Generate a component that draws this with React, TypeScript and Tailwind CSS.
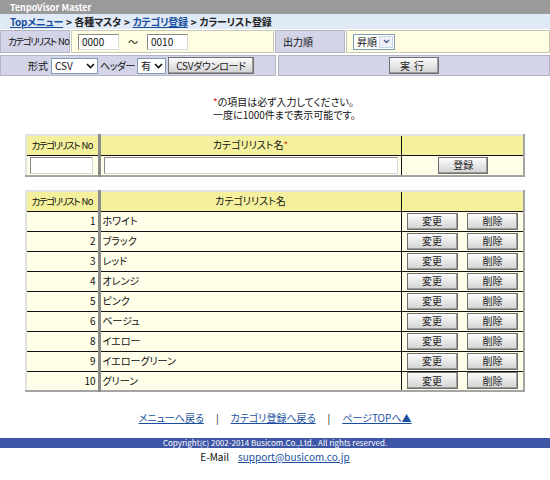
import React from "react";

const font = "font-['Noto_Sans_CJK_JP','Noto_Sans',sans-serif] [font-feature-settings:'palt']";

function Btn({ children, className = "" }: { children: React.ReactNode; className?: string }) {
  return (
    <button
      className={`flex h-[17px] items-center justify-center border border-[#707070] bg-linear-to-b from-[#fcfcfc] to-[#d2d2d2] text-[10px] leading-none whitespace-nowrap text-[#222] shadow-[inset_-1px_-1px_0_#9a9a9a] ${className}`}
    >
      {children}
    </button>
  );
}

function Select({ value, className = "", blue = false }: { value: string; className?: string; blue?: boolean }) {
  return (
    <div className={`flex h-[16px] items-stretch border border-[#7f9db9] bg-white text-[10px] ${className}`}>
      <span className="flex flex-1 items-center pl-[3px] leading-none">{value}</span>
      {blue ? (
        <span className="m-px flex w-[14px] items-center justify-center border border-[#c8d4e4] bg-[#eef2f8]">
          <svg width="7" height="5" viewBox="0 0 7 5">
            <path d="M1 1l2.5 2.5L6 1" stroke="#4d6185" strokeWidth="1.4" fill="none" />
          </svg>
        </span>
      ) : (
        <span className="flex w-[14px] items-center justify-center">
          <svg width="9" height="6" viewBox="0 0 9 6">
            <path d="M1 1l3.5 3.5L8 1" stroke="#111" strokeWidth="1.6" fill="none" />
          </svg>
        </span>
      )}
    </div>
  );
}

function TextBox({ value = "", className = "" }: { value?: string; className?: string }) {
  return (
    <div
      className={`flex h-[16px] items-center border border-t-[#8a8a8a] border-l-[#8a8a8a] border-r-[#d8d8d8] border-b-[#d8d8d8] bg-white pl-[3px] text-[10px] leading-none ${className}`}
    >
      {value}
    </div>
  );
}

// narrow label: the kana squeezed, "No" kept apart so it doesn't merge
function ListNoLabel() {
  return (
    <>
      <span className="tracking-[-1.4px]">カテゴリリスト</span>
      <span className="ml-[2px] tracking-[-0.5px]">No</span>
    </>
  );
}

const rows = [
  [1, "ホワイト"],
  [2, "ブラック"],
  [3, "レッド"],
  [4, "オレンジ"],
  [5, "ピンク"],
  [6, "ベージュ"],
  [8, "イエロー"],
  [9, "イエローグリーン"],
  [10, "グリーン"],
] as const;

const tableCls =
  "mx-auto w-[500px] table-fixed border-collapse border-2 border-t-[#e2e2e2] border-l-[#e2e2e2] border-r-[#a4a4a4] border-b-[#a4a4a4] text-[10px] leading-[12px] text-[#111]";

const noHead = "border-r-[3px] border-r-[#8c8c8c] whitespace-nowrap text-[9.5px] font-normal";

export default function App() {
  return (
    <div className={`h-[480px] w-[550px] overflow-hidden bg-white ${font}`}>
      {/* title bar */}
      <div className="flex h-[14px] items-center bg-[#9a9a9a] pl-[10px] text-[9px] font-bold leading-none text-white">
        TenpoVisor Master
      </div>

      {/* breadcrumb */}
      <div className="flex h-[15px] items-center bg-[#dfeaf6] pl-[10px] text-[10px] font-bold leading-none tracking-[-0.3px] text-[#222]">
        <a className="text-[#1a4fa0] underline">Topメニュー</a>
        <span className="mx-[3px]">&gt;</span>
        <span>各種マスタ</span>
        <span className="mx-[3px]">&gt;</span>
        <a className="text-[#1a4fa0] underline">カテゴリ登録</a>
        <span className="mx-[3px]">&gt;</span>
        <span>カラーリスト登録</span>
      </div>

      {/* search form */}
      <div className="mt-px flex h-[23px] gap-px text-[10px] leading-none text-[#111]">
        <div className="flex w-[70px] items-center border border-[#b4b4c4] bg-[#d3d4e8] pl-[7px] text-[9.5px] whitespace-nowrap">
          <ListNoLabel />
        </div>
        <div className="flex w-[203px] items-center border border-[#c8c8b8] bg-[#fffde2] pl-[6px]">
          <TextBox value="0000" className="w-[41px]" />
          <span className="mx-[9px]">～</span>
          <TextBox value="0010" className="w-[41px]" />
        </div>
        <div className="flex w-[70px] items-center border border-[#b4b4c4] bg-[#d3d4e8] pl-[7px]">出力順</div>
        <div className="flex flex-1 items-center border border-[#c8c8b8] bg-[#fffde2] pl-[6px]">
          <Select value="昇順" className="w-[42px]" blue />
        </div>
      </div>
      <div className="mt-[2px] flex h-[21px] gap-[2px] text-[10px] leading-none text-[#111]">
        <div className="flex w-[276px] items-center gap-[2px] border border-[#b4b4c4] bg-[#d3d4e8] pl-[27px]">
          <span className="mr-px">形式</span>
          <Select value="CSV" className="w-[47px]" />
          <span className="tracking-[-0.5px]">ヘッダー</span>
          <Select value="有" className="w-[29px]" />
          <Btn className="w-[86px] tracking-[-0.3px]">CSVダウンロード</Btn>
        </div>
        <div className="flex flex-1 items-center justify-center border border-[#b4b4c4] bg-[#d3d4e8]">
          <Btn className="w-[50px] tracking-[4px]">実行</Btn>
        </div>
      </div>

      {/* notes */}
      <div className="mt-[19px] pl-[213px] text-[10px] leading-[13px] text-[#111]">
        <p>
          <span className="text-[#e02020]">*</span>の項目は必ず入力してください。
        </p>
        <p>一度に1000件まで表示可能です。</p>
      </div>

      {/* entry table */}
      <table className={`mt-[13px] ${tableCls}`}>
        <colgroup>
          <col className="w-[73px]" />
          <col className="w-[302px]" />
          <col />
        </colgroup>
        <thead>
          <tr className="h-[20px] bg-[#f4f09e]">
            <th className={noHead}>
              <ListNoLabel />
            </th>
            <th className="border-r border-r-[#111] font-normal">
              カテゴリリスト名<span className="text-[#d04020]">*</span>
            </th>
            <th />
          </tr>
        </thead>
        <tbody>
          <tr className="h-[21px] border-t border-t-[#111] bg-[#fefee9]">
            <td className="border-r-[3px] border-r-[#8c8c8c] px-[3px]">
              <TextBox className="h-[17px] w-[63px]" />
            </td>
            <td className="border-r border-r-[#111] px-[3px]">
              <TextBox className="h-[17px] w-full" />
            </td>
            <td>
              <div className="flex justify-center pl-[2px]">
                <Btn className="h-[16px] w-[50px]">登録</Btn>
              </div>
            </td>
          </tr>
        </tbody>
      </table>

      {/* list table */}
      <table className={`mt-[13px] ${tableCls}`}>
        <colgroup>
          <col className="w-[73px]" />
          <col className="w-[302px]" />
          <col />
        </colgroup>
        <thead>
          <tr className="h-[20px] bg-[#f4f09e]">
            <th className={noHead}>
              <ListNoLabel />
            </th>
            <th className="border-r border-r-[#111] font-normal">カテゴリリスト名</th>
            <th />
          </tr>
        </thead>
        <tbody>
          {rows.map(([no, name]) => (
            <tr key={no} className="h-[20px] border-t border-t-[#111] bg-[#fefee9]">
              <td className="border-r-[3px] border-r-[#8c8c8c] pr-[2px] text-right">{no}</td>
              <td className="border-r border-r-[#111] pl-[2px]">{name}</td>
              <td>
                <div className="flex items-center justify-between px-[5px]">
                  <Btn className="w-[51px]">変更</Btn>
                  <Btn className="w-[51px]">削除</Btn>
                </div>
              </td>
            </tr>
          ))}
        </tbody>
      </table>

      {/* footer links */}
      <div className="mt-[21px] flex justify-center text-[10px] leading-none text-[#111]">
        <a className="text-[#1a4fa0] underline">メニューへ戻る</a>
        <span className="mx-[12px]">|</span>
        <a className="text-[#1a4fa0] underline">カテゴリ登録へ戻る</a>
        <span className="mx-[12px]">|</span>
        <a className="text-[#1a4fa0] underline">ページTOPへ▲</a>
      </div>

      <div className="mt-[15px] flex h-[10px] items-center justify-center bg-[#3d56a6] text-[8px] leading-none text-white">
        Copyright(c) 2002-2014 Busicom.Co.,Ltd.. All rights reserved.
      </div>
      <div className="mt-[4px] flex justify-center text-[10px] leading-none text-[#111]">
        <span className="mr-[9px]">E-Mail</span>
        <a className="text-[#1a4fa0] underline">support@busicom.co.jp</a>
      </div>
    </div>
  );
}
